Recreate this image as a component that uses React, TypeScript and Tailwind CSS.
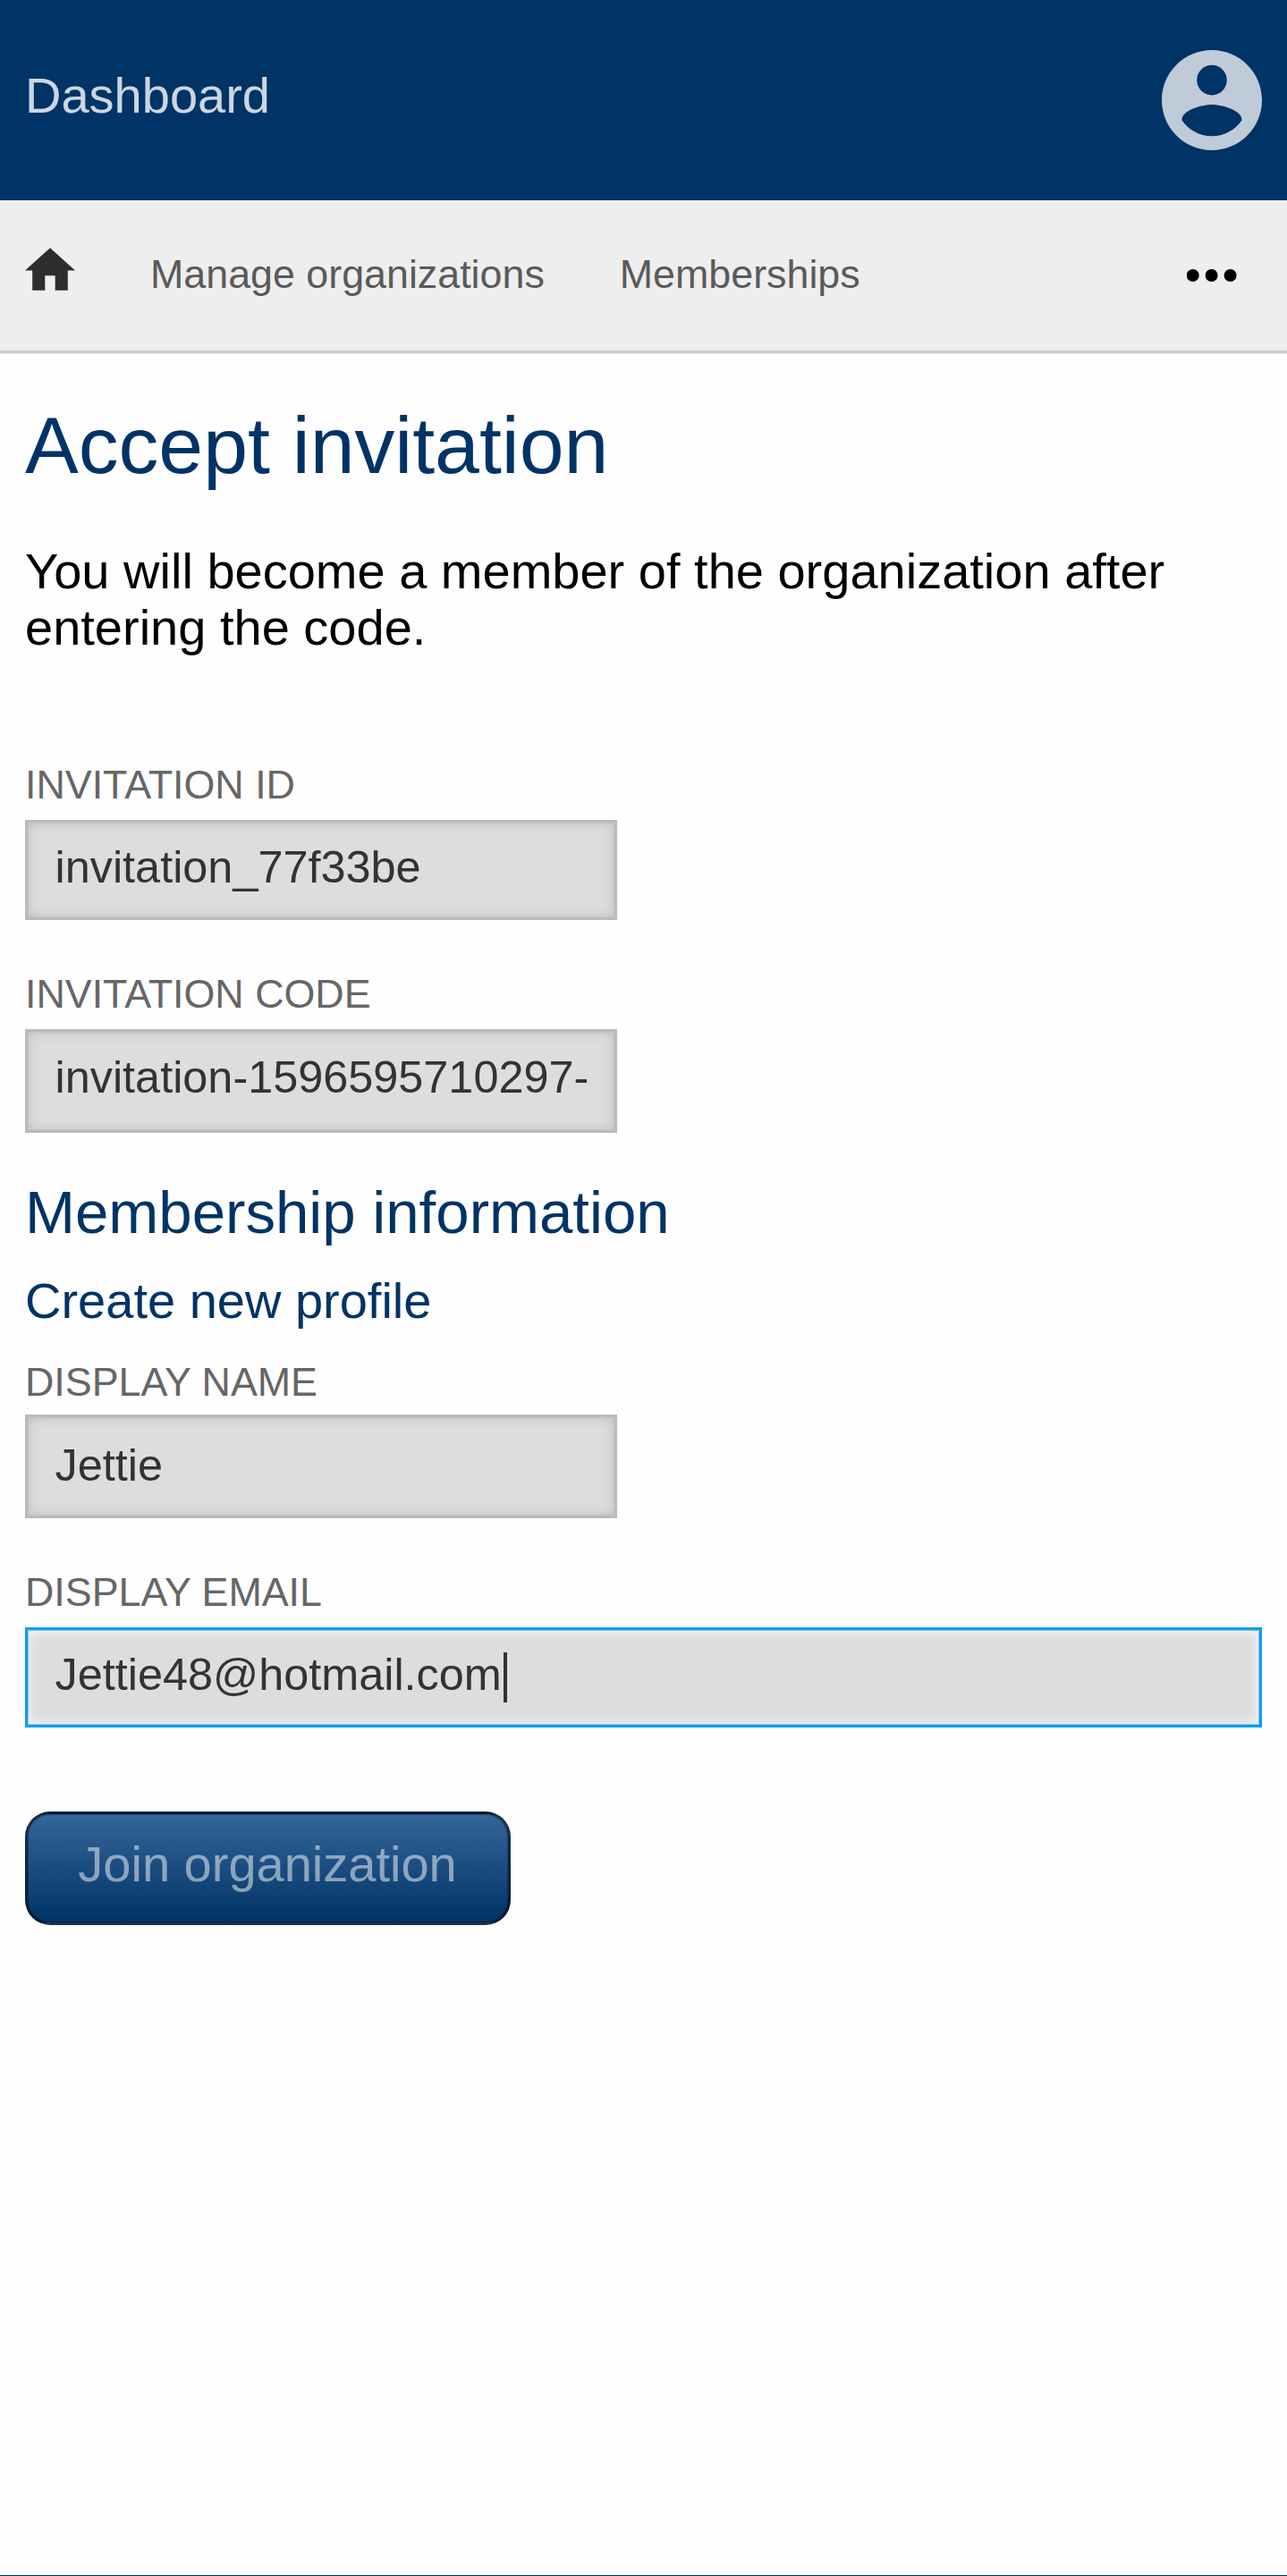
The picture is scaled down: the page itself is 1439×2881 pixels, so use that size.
import type { ReactNode } from "react";

function AccountIcon() {
  return (
    <svg className="size-[112px] text-white/75" viewBox="2 2 20 20" fill="currentColor">
      <path d="M12 2C6.48 2 2 6.48 2 12s4.48 10 10 10 10-4.48 10-10S17.52 2 12 2zm0 3c1.66 0 3 1.34 3 3s-1.34 3-3 3-3-1.34-3-3 1.34-3 3-3zm0 14.2c-2.5 0-4.71-1.28-6-3.22.03-1.99 4-3.08 6-3.08 1.99 0 5.97 1.09 6 3.08-1.29 1.94-3.5 3.22-6 3.22z" />
    </svg>
  );
}

function HomeIcon() {
  return (
    <svg className="h-[48px] w-[56px] text-[#2e2e2e]" viewBox="0 0 56 48" fill="currentColor">
      <path d="M28 0.2 56 25.4H47.8V47.7H33.7V31.2H22.3V47.7H8.2V25.4H0z" />
    </svg>
  );
}

function MoreIcon() {
  return (
    <svg className="h-[14px] w-[56px]" viewBox="0 0 56 14">
      <circle cx="6.7" cy="7" r="7" />
      <circle cx="27.6" cy="7" r="7" />
      <circle cx="48.6" cy="7" r="7" />
    </svg>
  );
}

function Label({ className, children }: { className: string; children: ReactNode }) {
  return (
    <div className={`text-[44.8px] leading-[51px] whitespace-nowrap text-[#666] uppercase ${className}`}>
      {children}
    </div>
  );
}

function Field({ className, children }: { className: string; children: ReactNode }) {
  return (
    <div
      className={`w-[662px] border-[3px] border-[#bbb] bg-[#ddd] px-[30.5px] text-[50.4px] leading-[57px] whitespace-nowrap text-[#333] shadow-[inset_0_0_0_1px_#bbbbbb80,inset_0_0_14px_#bbb] ${className}`}
    >
      {children}
    </div>
  );
}

export default function App() {
  return (
    <div className="flex h-[2881px] w-[1439px] flex-col overflow-hidden border-b border-[#003366] bg-[#fefefe] font-['Liberation_Sans',Arial,sans-serif] text-black">
      <header className="flex h-[224px] shrink-0 items-center justify-between bg-[#003366] px-7">
        <span className="-mt-[11px] text-[56px] leading-[63px] text-white/80">Dashboard</span>
        <AccountIcon />
      </header>
      <nav className="flex h-[171px] shrink-0 items-start border-b-[3px] border-[#ccc] bg-[#eee] pr-[56px] pl-7 text-[44.8px] leading-[51px] text-[#5a5a5a] shadow-[0_1px_0_#e5e5e5]">
        <div className="mt-[53px]">
          <HomeIcon />
        </div>
        <span className="mt-[57px] ml-[84px]">Manage organizations</span>
        <span className="mt-[57px] ml-[84px]">Memberships</span>
        <div className="mt-[77px] ml-auto">
          <MoreIcon />
        </div>
      </nav>
      <main className="px-7">
        <h1 className="mt-[53px] text-[89.6px] leading-[100px] text-[#003366]">Accept invitation</h1>
        <p className="mt-[59px] text-[56px] leading-[63px]">
          You will become a member of the organization after entering the code.
        </p>
        <Label className="mt-[119px]">Invitation ID</Label>
        <Field className="mt-[14px] h-[112px] pt-[21px]">invitation_77f33be</Field>
        <Label className="mt-[57px]">Invitation code</Label>
        <Field className="mt-[14px] h-[116px] pt-[22px]">invitation-1596595710297-</Field>
        <h2 className="mt-[51px] text-[67.2px] leading-[75px] text-[#003366]">Membership information</h2>
        <h3 className="mt-[30px] text-[56px] leading-[63px] text-[#003366]">Create new profile</h3>
        <Label className="mt-[34px]">Display name</Label>
        <Field className="mt-[11px] h-[116px] pt-[25px]">Jettie</Field>
        <Label className="mt-[57px]">Display email</Label>
        <div className="mt-[14px] flex h-[112px] items-start border-[3px] border-[#109fe9] bg-[#ddd] px-[30.5px] pt-[21px] text-[50.4px] leading-[57px] text-[#333] shadow-[inset_0_0_0_1px_#109fe980,inset_0_0_14px_#fff]">
          Jettie48@hotmail.com
          <span className="mt-1 ml-[2px] h-[56px] w-[4px] bg-[#333]" />
        </div>
        <button className="mt-[94px] block h-[127px] w-[543px] rounded-[28px] border-[3px] border-black/50 bg-linear-to-b from-[#336699] to-[#003366] pr-px pb-[10px] text-[56px] leading-[63px] text-white/50 shadow-[inset_0_0_0_1px_#00000040]">
          Join organization
        </button>
      </main>
    </div>
  );
}
